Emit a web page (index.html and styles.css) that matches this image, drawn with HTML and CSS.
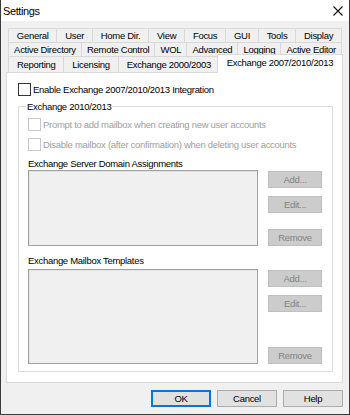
FILE: index.html
```html
<!DOCTYPE html>
<html lang="en">
<head>
    <meta charset="UTF-8">
    <title>Settings</title>
    <link rel="stylesheet" href="styles.css">
</head>
<body>
<div class="window">
    <div class="titlebar">
        <span class="title">Settings</span>
        <svg class="close" width="10" height="10" viewBox="0 0 10 10">
            <path d="M0.5 0.5 L9.5 9.5 M9.5 0.5 L0.5 9.5" stroke="#111" stroke-width="1.1" fill="none"/>
        </svg>
    </div>

    <div class="tabs">
        <div class="tab-row">
            <div class="tab">General</div>
            <div class="tab">User</div>
            <div class="tab">Home Dir.</div>
            <div class="tab">View</div>
            <div class="tab">Focus</div>
            <div class="tab">GUI</div>
            <div class="tab">Tools</div>
            <div class="tab">Display</div>
        </div>
        <div class="tab-row">
            <div class="tab">Active Directory</div>
            <div class="tab">Remote Control</div>
            <div class="tab">WOL</div>
            <div class="tab">Advanced</div>
            <div class="tab">Logging</div>
            <div class="tab">Active Editor</div>
        </div>
        <div class="tab-row last">
            <div class="tab">Reporting</div>
            <div class="tab">Licensing</div>
            <div class="tab">Exchange 2000/2003</div>
            <div class="tab active">Exchange 2007/2010/2013</div>
        </div>
    </div>

    <div class="panel">
        <label class="check main-check">
            <span class="box"></span>
            Enable Exchange 2007/2010/2013 Integration
        </label>

        <fieldset class="group">
            <legend>Exchange 2010/2013</legend>
            <label class="check disabled first">
                <span class="box"></span>
                Prompt to add mailbox when creating new user accounts
            </label>
            <label class="check disabled">
                <span class="box"></span>
                Disable mailbox (after confirmation) when deleting user accounts
            </label>

            <div class="section-label">Exchange Server Domain Assignments</div>
            <div class="list-block domains">
                <div class="listbox"></div>
                <div class="side-buttons">
                    <button class="btn" disabled>Add...</button>
                    <button class="btn" disabled>Edit...</button>
                    <button class="btn push" disabled>Remove</button>
                </div>
            </div>

            <div class="section-label second">Exchange Mailbox Templates</div>
            <div class="list-block templates">
                <div class="listbox"></div>
                <div class="side-buttons">
                    <button class="btn" disabled>Add...</button>
                    <button class="btn" disabled>Edit...</button>
                    <button class="btn push" disabled>Remove</button>
                </div>
            </div>
        </fieldset>
    </div>

    <div class="footer">
        <button class="btn dlg default">OK</button>
        <button class="btn dlg">Cancel</button>
        <button class="btn dlg">Help</button>
    </div>
</div>
</body>
</html>
```

FILE: styles.css
```css
body {
    margin: 0;
    font-family: "Liberation Sans", Arial, sans-serif;
    font-size: 9.5px;
    letter-spacing: -0.3px;
    color: #000;
    background: #fff;
}
.window {
    width: 350px;
    height: 415px;
    box-sizing: border-box;
    border: 1px solid #3a3a3a;
    border-top: none;
    background-color: #f0f0f0;
    display: flex;
    flex-direction: column;
}
.titlebar {
    height: 21px;
    background-color: #fff;
    display: flex;
    align-items: center;
    justify-content: space-between;
    padding: 0 6px 0 2px;
}
.title {
    font-size: 11px;
    letter-spacing: -0.4px;
}
.tabs {
    margin: 7px 6px 0 5px;
}
.tab-row {
    display: flex;
    height: 14px;
    padding: 0 2px;
}
.tab-row.last {
    height: 16px;
    padding-right: 0;
}
.tab {
    flex: 1 1 auto;
    text-align: center;
    line-height: 13px;
    border: 1px solid #d9d9d9;
    border-bottom: none;
    margin-right: -1px;
    white-space: nowrap;
    color: #000;
}
.tab-row.last .tab {
    line-height: 15px;
}
.tab.active {
    background-color: #fff;
    margin: -2px 0 -1px -2px;
    position: relative;
    line-height: 14px;
    padding-bottom: 3px;
    flex: 0 0 124px;
}
.panel {
    box-sizing: border-box;
    background-color: #fff;
    border: 1px solid #d9d9d9;
    margin: 0 6px 0 5px;
    height: 311px;
    padding: 10px 9px 0 11px;
}
.check {
    display: flex;
    align-items: center;
    height: 13px;
    line-height: 13px;
}
.box {
    width: 11px;
    height: 11px;
    border: 1px solid #333;
    background: #fff;
    margin-right: 2px;
}
.check.disabled {
    color: #a0a0a0;
    margin-top: 7px;
}
.check.disabled.first {
    margin-top: 5px;
}
.check.disabled .box {
    border-color: #c8c8c8;
}
.group {
    margin: 4px 0 0 0;
    border: 1px solid #dcdcdc;
    padding: 0 10px 7px 9px;
}
.group legend {
    padding: 0 1px;
    margin-left: -2px;
    line-height: 13px;
}
.section-label {
    margin-top: 6px;
    line-height: 13px;
}
.section-label.second {
    margin-top: 8px;
}
.list-block {
    display: grid;
    grid-template-columns: 230px 54px;
    column-gap: 10px;
}
.list-block.domains {
    height: 76px;
}
.list-block.templates {
    height: 95px;
    margin-top: 2px;
}
.listbox {
    background-color: #f0f0f0;
    border: 1px solid #a0a0a0;
    box-shadow: inset 1px 1px 0 #e3e3e3;
}
.side-buttons {
    display: flex;
    flex-direction: column;
    padding-top: 1px;
    gap: 8px;
}
.push {
    margin-top: auto;
}
.btn {
    font-family: inherit;
    font-size: inherit;
    letter-spacing: inherit;
    height: 17px;
    padding: 0;
    border: 1px solid #adadad;
    background-color: #e1e1e1;
    color: #000;
}
.btn:disabled {
    background-color: #cccccc;
    border-color: #bfbfbf;
    color: #838383;
}
.footer {
    display: flex;
    justify-content: flex-end;
    gap: 6px;
    padding: 7px 6px 0 0;
}
.btn.dlg {
    width: 60px;
    height: 17px;
}
.btn.default {
    border: 2px solid #0078d7;
}
```
